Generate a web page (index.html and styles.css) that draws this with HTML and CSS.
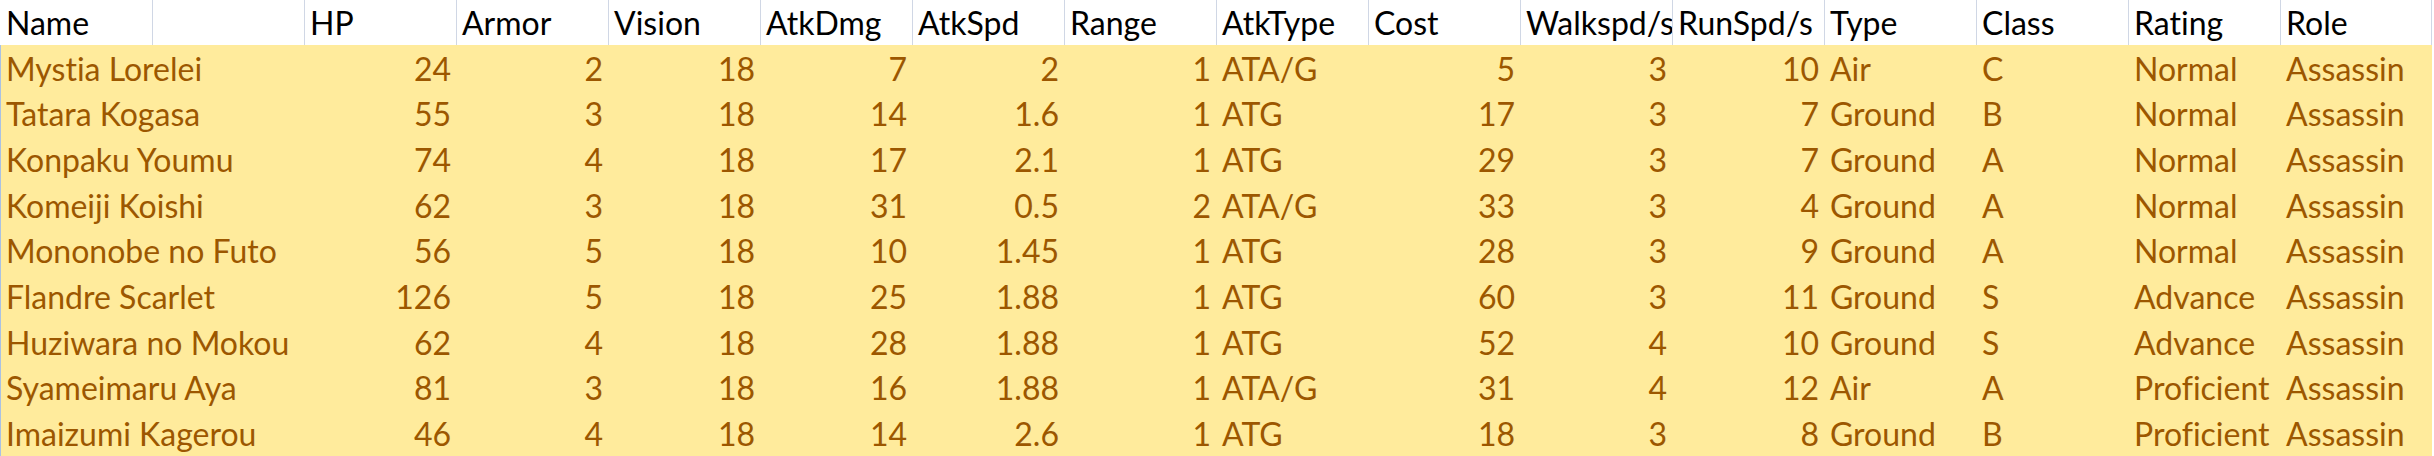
FILE: index.html
```html
<!DOCTYPE html>
<html lang="en">
<head>
<meta charset="utf-8">
<title>Units</title>
<link rel="stylesheet" href="styles.css">
</head>
<body>
<div class="sheet">
  <div class="row head">
    <div class="cell">Name</div><div class="cell"></div><div class="cell">HP</div><div class="cell">Armor</div><div class="cell">Vision</div><div class="cell">AtkDmg</div><div class="cell">AtkSpd</div><div class="cell">Range</div><div class="cell">AtkType</div><div class="cell">Cost</div><div class="cell">Walkspd/s</div><div class="cell">RunSpd/s</div><div class="cell">Type</div><div class="cell">Class</div><div class="cell">Rating</div><div class="cell">Role</div>
  </div>
  <div class="row data">
    <div class="cell name">Mystia Lorelei</div><div class="cell num">24</div><div class="cell num">2</div><div class="cell num">18</div><div class="cell num">7</div><div class="cell num">2</div><div class="cell num">1</div><div class="cell">ATA/G</div><div class="cell num">5</div><div class="cell num">3</div><div class="cell num">10</div><div class="cell">Air</div><div class="cell">C</div><div class="cell">Normal</div><div class="cell">Assassin</div>
  </div>
  <div class="row data">
    <div class="cell name">Tatara Kogasa</div><div class="cell num">55</div><div class="cell num">3</div><div class="cell num">18</div><div class="cell num">14</div><div class="cell num">1.6</div><div class="cell num">1</div><div class="cell">ATG</div><div class="cell num">17</div><div class="cell num">3</div><div class="cell num">7</div><div class="cell">Ground</div><div class="cell">B</div><div class="cell">Normal</div><div class="cell">Assassin</div>
  </div>
  <div class="row data">
    <div class="cell name">Konpaku Youmu</div><div class="cell num">74</div><div class="cell num">4</div><div class="cell num">18</div><div class="cell num">17</div><div class="cell num">2.1</div><div class="cell num">1</div><div class="cell">ATG</div><div class="cell num">29</div><div class="cell num">3</div><div class="cell num">7</div><div class="cell">Ground</div><div class="cell">A</div><div class="cell">Normal</div><div class="cell">Assassin</div>
  </div>
  <div class="row data">
    <div class="cell name">Komeiji Koishi</div><div class="cell num">62</div><div class="cell num">3</div><div class="cell num">18</div><div class="cell num">31</div><div class="cell num">0.5</div><div class="cell num">2</div><div class="cell">ATA/G</div><div class="cell num">33</div><div class="cell num">3</div><div class="cell num">4</div><div class="cell">Ground</div><div class="cell">A</div><div class="cell">Normal</div><div class="cell">Assassin</div>
  </div>
  <div class="row data">
    <div class="cell name">Mononobe no Futo</div><div class="cell num">56</div><div class="cell num">5</div><div class="cell num">18</div><div class="cell num">10</div><div class="cell num">1.45</div><div class="cell num">1</div><div class="cell">ATG</div><div class="cell num">28</div><div class="cell num">3</div><div class="cell num">9</div><div class="cell">Ground</div><div class="cell">A</div><div class="cell">Normal</div><div class="cell">Assassin</div>
  </div>
  <div class="row data">
    <div class="cell name">Flandre Scarlet</div><div class="cell num">126</div><div class="cell num">5</div><div class="cell num">18</div><div class="cell num">25</div><div class="cell num">1.88</div><div class="cell num">1</div><div class="cell">ATG</div><div class="cell num">60</div><div class="cell num">3</div><div class="cell num">11</div><div class="cell">Ground</div><div class="cell">S</div><div class="cell">Advance</div><div class="cell">Assassin</div>
  </div>
  <div class="row data">
    <div class="cell name">Huziwara no Mokou</div><div class="cell num">62</div><div class="cell num">4</div><div class="cell num">18</div><div class="cell num">28</div><div class="cell num">1.88</div><div class="cell num">1</div><div class="cell">ATG</div><div class="cell num">52</div><div class="cell num">4</div><div class="cell num">10</div><div class="cell">Ground</div><div class="cell">S</div><div class="cell">Advance</div><div class="cell">Assassin</div>
  </div>
  <div class="row data">
    <div class="cell name">Syameimaru Aya</div><div class="cell num">81</div><div class="cell num">3</div><div class="cell num">18</div><div class="cell num">16</div><div class="cell num">1.88</div><div class="cell num">1</div><div class="cell">ATA/G</div><div class="cell num">31</div><div class="cell num">4</div><div class="cell num">12</div><div class="cell">Air</div><div class="cell">A</div><div class="cell">Proficient</div><div class="cell">Assassin</div>
  </div>
  <div class="row data">
    <div class="cell name">Imaizumi Kagerou</div><div class="cell num">46</div><div class="cell num">4</div><div class="cell num">18</div><div class="cell num">14</div><div class="cell num">2.6</div><div class="cell num">1</div><div class="cell">ATG</div><div class="cell num">18</div><div class="cell num">3</div><div class="cell num">8</div><div class="cell">Ground</div><div class="cell">B</div><div class="cell">Proficient</div><div class="cell">Assassin</div>
  </div>
</div>
</body>
</html>
```
FILE: styles.css
```css
html, body {
  margin: 0;
  padding: 0;
  background: #ffffff;
}

body {
  font-family: "Lato", "Open Sans", sans-serif;
  font-size: 32px;
  font-variant-ligatures: none;
  font-feature-settings: "liga" 0, "clig" 0;
  overflow: hidden;
}

.sheet {
  display: flex;
  flex-direction: column;
  width: 2432px;
}

.row {
  display: grid;
  grid-template-columns: repeat(16, 152px);
}

.head {
  height: 45px;
  background: #ffffff;
  color: #000000;
}

.head .cell + .cell {
  border-left: 1px solid #d0d7e5;
}

.head .cell:last-child {
  border-right: 1px solid #d0d7e5;
}

.data {
  height: 45.667px;
  background: #ffeb9c;
  color: #9c5700;
  box-shadow: inset 1px 0 0 #a9c1e4;
}

.cell {
  box-sizing: border-box;
  display: flex;
  align-items: flex-end;
  padding: 0 5px 3px 6px;
  line-height: 38px;
  white-space: nowrap;
  overflow: hidden;
}

.head .cell + .cell {
  padding-left: 5px;
}

.name {
  grid-column: span 2;
}

.num {
  justify-content: flex-end;
}
```
